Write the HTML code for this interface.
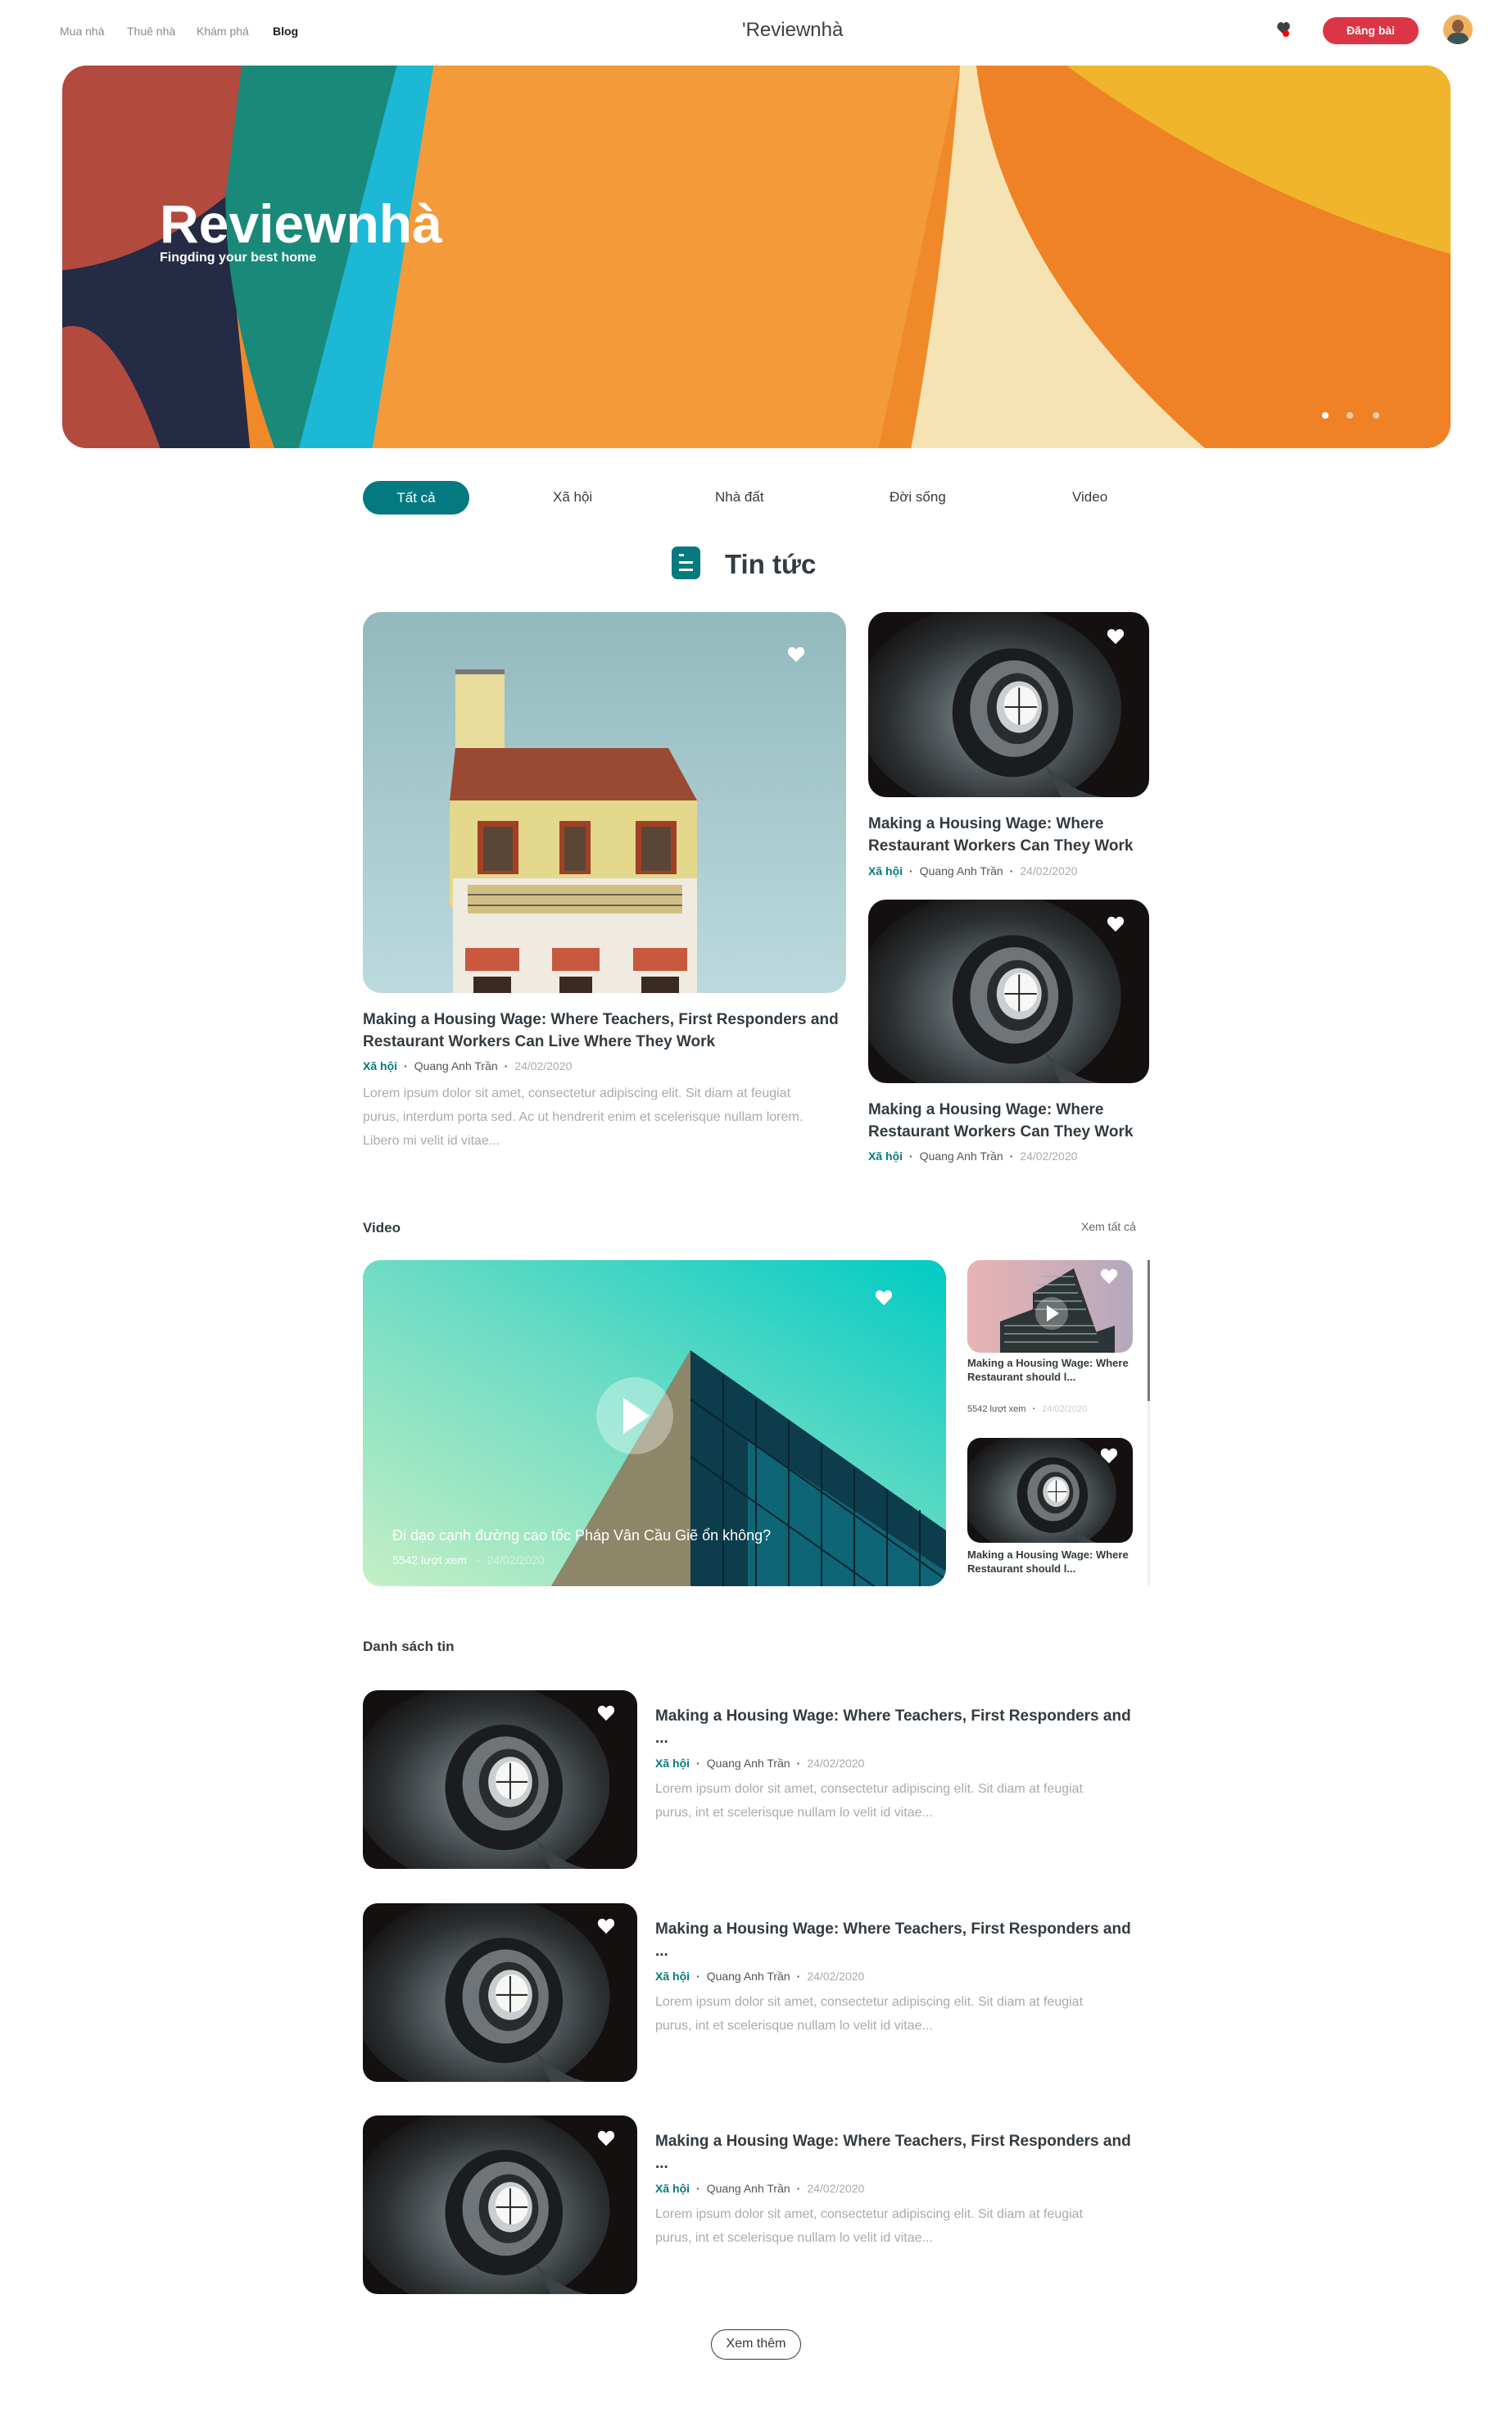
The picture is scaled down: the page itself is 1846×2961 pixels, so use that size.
<!DOCTYPE html>
<html><head><meta charset="utf-8">
<style>
*{margin:0;padding:0;box-sizing:border-box}
body{width:1846px;height:2961px;background:#fff;font-family:"Liberation Sans",sans-serif;color:#333b40;position:relative;overflow:hidden}
.a{position:absolute}
.nav{font-size:14px;color:#8a8a8a;top:30px}
.t{color:#333b40;font-weight:600;font-size:19px;line-height:27px}
.meta{font-size:14px;color:#555;white-space:nowrap}
.meta .c{color:#047a80;font-weight:600}
.meta .d{color:#aaa}
.meta .dot{margin:0 8px;font-weight:bold}
.desc{font-size:16px;color:#aaa;line-height:29px}
.img{position:absolute;overflow:hidden;border-radius:22px}
.heart{position:absolute;width:22px;height:20px}
</style></head><body>
<svg width="0" height="0" style="position:absolute">
<defs>
<radialGradient id="sg" cx="0.55" cy="0.55" r="0.6"><stop offset="0" stop-color="#9aa2a4"/><stop offset="0.35" stop-color="#5c6468"/><stop offset="0.7" stop-color="#2c3032"/><stop offset="1" stop-color="#141212"/></radialGradient>
<symbol id="spiral" viewBox="0 0 350 230" preserveAspectRatio="xMidYMid slice">
<rect width="350" height="230" fill="#141010"/>
<ellipse cx="150" cy="120" rx="165" ry="130" fill="url(#sg)"/>
<ellipse cx="180" cy="125" rx="75" ry="80" fill="#1b1c1d"/>
<ellipse cx="182" cy="120" rx="55" ry="60" fill="#6e7477"/>
<ellipse cx="186" cy="120" rx="38" ry="44" fill="#2a2b2c"/>
<ellipse cx="188" cy="118" rx="28" ry="32" fill="#c9cfd1"/>
<ellipse cx="190" cy="116" rx="21" ry="24" fill="#f7f7f5"/>
<line x1="170" y1="118" x2="210" y2="118" stroke="#222" stroke-width="2"/>
<line x1="188" y1="94" x2="188" y2="140" stroke="#222" stroke-width="2"/>
<path d="M220 190 Q260 230 300 230 L240 230 Z" fill="#3c4245"/>
</symbol>
<symbol id="hrt" viewBox="0 0 24 22"><path d="M12 21 L3 12 C-1 8 1 1 6.5 1 C9 1 11 2.5 12 4.5 C13 2.5 15 1 17.5 1 C23 1 25 8 21 12 Z" fill="#fff"/></symbol>
<linearGradient id="sky" x1="0" y1="0" x2="0" y2="1"><stop offset="0" stop-color="#93b9bd"/><stop offset="1" stop-color="#bcdadd"/></linearGradient>
</defs></svg>

<!-- NAV -->
<div class="a nav" style="left:73px">Mua nhà</div>
<div class="a nav" style="left:155px">Thuê nhà</div>
<div class="a nav" style="left:240px">Khám phá</div>
<div class="a nav" style="left:333px;color:#222;font-weight:bold">Blog</div>
<div class="a" style="left:906px;top:23px;font-size:24px;color:#3a4146">'Reviewnhà</div>
<svg class="a" style="left:1559px;top:26px" width="18" height="20" viewBox="0 0 18 20"><path d="M8 16 L1 9 C-1 5 2 1 5 1 C6.5 1 7.5 2 8 3 C8.5 2 9.5 1 11 1 C15 1 17 5 15 9 Z" fill="#3a4146"/><circle cx="11" cy="15" r="4" fill="#f00"/></svg>
<div class="a" style="left:1615px;top:21px;width:117px;height:33px;border-radius:17px;background:#dc3545;color:#fff;font-size:14px;font-weight:bold;text-align:center;line-height:33px">Đăng bài</div>
<div class="a" style="left:1762px;top:18px;width:36px;height:36px;border-radius:50%;background:#f2b160;overflow:hidden"><div style="position:absolute;left:11px;top:6px;width:14px;height:16px;border-radius:50%;background:#8a5a3c"></div><div style="position:absolute;left:5px;top:22px;width:26px;height:20px;border-radius:10px 10px 0 0;background:#3b5656"></div></div>

<!-- HERO -->
<div class="img" style="left:76px;top:80px;width:1695px;height:467px;border-radius:30px">
<svg width="1695" height="467" viewBox="0 0 1701 467" preserveAspectRatio="none">
<rect width="1701" height="467" fill="#f0892a"/>
<path d="M0 0 H220 L200 467 H0Z" fill="#b24a3d"/>
<path d="M0 250 Q100 240 200 160 L230 467 H120 Q60 300 0 320Z" fill="#252a45"/>
<path d="M220 0 H420 L350 467 H260 Q200 300 200 160Z" fill="#19897a"/>
<path d="M410 0 H460 L380 467 H290Z" fill="#1cb8d5"/>
<path d="M455 0 H1100 L1000 467 H380Z" fill="#f39a3a"/>
<path d="M1100 0 H1120 Q1150 250 1400 467 H1040 Q1080 250 1100 0Z" fill="#f5e3b4"/>
<path d="M1230 0 H1701 V230 Q1450 160 1230 0Z" fill="#f0b52c"/>
<path d="M1120 0 H1230 Q1450 160 1701 230 V467 H1400 Q1150 250 1120 0Z" fill="#ef8226"/>
</svg>
<div class="a" style="left:119px;top:155px;font-size:66px;font-weight:bold;color:#fff">Reviewnhà</div>
<div class="a" style="left:119px;top:226px;font-size:16px;font-weight:bold;color:#fff">Fingding your best home</div>
<div class="a" style="left:1538px;top:423px;width:8px;height:8px;border-radius:50%;background:#fff"></div>
<div class="a" style="left:1568px;top:423px;width:8px;height:8px;border-radius:50%;background:rgba(255,255,255,.6)"></div>
<div class="a" style="left:1600px;top:423px;width:8px;height:8px;border-radius:50%;background:rgba(255,255,255,.6)"></div>
</div>

<!-- TABS -->
<div class="a" style="left:443px;top:587px;width:130px;height:41px;border-radius:21px;background:#047a80;color:#fff;font-size:17px;text-align:center;line-height:41px">Tất cả</div>
<div class="a" style="left:675px;top:597px;font-size:17px">Xã hội</div>
<div class="a" style="left:873px;top:597px;font-size:17px">Nhà đất</div>
<div class="a" style="left:1086px;top:597px;font-size:17px">Đời sống</div>
<div class="a" style="left:1309px;top:597px;font-size:17px">Video</div>

<!-- TIN TUC -->
<div class="a" style="left:820px;top:667px;width:35px;height:40px;border-radius:7px;background:#047a80"><div style="position:absolute;left:9px;top:9px;width:6px;height:3px;background:#fff"></div><div style="position:absolute;left:9px;top:18px;width:17px;height:3px;background:#fff"></div><div style="position:absolute;left:9px;top:27px;width:17px;height:3px;background:#fff"></div></div>
<div class="a" style="left:885px;top:670px;font-size:33px;font-weight:bold;color:#333b40">Tin tức</div>

<!-- BIG CARD -->
<div class="img" style="left:443px;top:747px;width:590px;height:465px">
<svg width="590" height="465" viewBox="0 0 590 465">
<rect width="590" height="465" fill="url(#sky)"/>
<rect x="113" y="74" width="60" height="92" fill="#e9dc9c"/>
<rect x="113" y="70" width="60" height="6" fill="#777"/>
<path d="M113 166 H373 L408 230 H106Z" fill="#9a4a32"/>
<rect x="106" y="230" width="302" height="130" fill="#e3d88c"/>
<rect x="140" y="255" width="50" height="65" fill="#a33f24"/><rect x="147" y="262" width="36" height="54" fill="#5a4636"/>
<rect x="240" y="255" width="38" height="65" fill="#a33f24"/><rect x="246" y="262" width="26" height="54" fill="#5a4636"/>
<rect x="333" y="255" width="50" height="65" fill="#a33f24"/><rect x="340" y="262" width="36" height="54" fill="#5a4636"/>
<rect x="110" y="325" width="298" height="140" fill="#f0ebe0"/>
<rect x="128" y="333" width="262" height="35" fill="#c9b56a" opacity=".8"/>
<path d="M128 345 H390 M128 358 H390" stroke="#444" stroke-width="1.5"/>
<rect x="125" y="410" width="66" height="28" fill="#c8583e"/>
<rect x="231" y="410" width="58" height="28" fill="#c8583e"/>
<rect x="330" y="410" width="66" height="28" fill="#c8583e"/>
<rect x="135" y="445" width="46" height="20" fill="#3a2a22"/><rect x="240" y="445" width="40" height="20" fill="#3a2a22"/><rect x="340" y="445" width="46" height="20" fill="#3a2a22"/>
</svg>
<svg class="heart" style="left:518px;top:42px"><use href="#hrt"/></svg>
</div>
<div class="a t" style="left:443px;top:1231px;width:590px">Making a Housing Wage: Where Teachers, First Responders and Restaurant Workers Can Live Where They Work</div>
<div class="a meta" style="left:443px;top:1293px"><span class="c">Xã hội</span><span class="dot">·</span>Quang Anh Trần<span class="dot">·</span><span class="d">24/02/2020</span></div>
<div class="a desc" style="left:443px;top:1320px;width:560px">Lorem ipsum dolor sit amet, consectetur adipiscing elit. Sit diam at feugiat purus, interdum porta sed. Ac ut hendrerit enim et scelerisque nullam lorem. Libero mi velit id vitae...</div>

<!-- RIGHT CARDS -->
<div class="img" style="left:1060px;top:747px;width:343px;height:226px"><svg width="343" height="226"><use href="#spiral" width="343" height="226"/></svg><svg class="heart" style="left:291px;top:20px"><use href="#hrt"/></svg></div>
<div class="a t" style="left:1060px;top:992px;width:350px">Making a Housing Wage: Where Restaurant Workers Can They Work</div>
<div class="a meta" style="left:1060px;top:1055px"><span class="c">Xã hội</span><span class="dot">·</span>Quang Anh Trần<span class="dot">·</span><span class="d">24/02/2020</span></div>
<div class="img" style="left:1060px;top:1098px;width:343px;height:224px"><svg width="343" height="224"><use href="#spiral" width="343" height="224"/></svg><svg class="heart" style="left:291px;top:20px"><use href="#hrt"/></svg></div>
<div class="a t" style="left:1060px;top:1341px;width:350px">Making a Housing Wage: Where Restaurant Workers Can They Work</div>
<div class="a meta" style="left:1060px;top:1403px"><span class="c">Xã hội</span><span class="dot">·</span>Quang Anh Trần<span class="dot">·</span><span class="d">24/02/2020</span></div>

<!-- VIDEO -->
<div class="a" style="left:443px;top:1489px;font-size:17px;font-weight:600">Video</div>
<div class="a" style="left:1320px;top:1489px;font-size:14px;color:#666">Xem tất cả</div>
<div class="img" style="left:443px;top:1538px;width:712px;height:398px">
<svg width="712" height="398" viewBox="0 0 712 398">
<defs><linearGradient id="vg" x1="0" y1="1" x2="1" y2="0"><stop offset="0" stop-color="#c4efc4"/><stop offset="0.5" stop-color="#6fdcc4"/><stop offset="1" stop-color="#00cbc4"/></linearGradient></defs>
<rect width="712" height="398" fill="url(#vg)"/>
<path d="M400 110 L712 330 V398 H230Z" fill="#0d3c4c"/>
<path d="M400 110 L230 398 H400Z" fill="#8e8668"/>
<path d="M470 220 L712 380 V398 H470Z" fill="#0f6f80" opacity=".8"/>
<g stroke="#0a2530" stroke-width="2"><path d="M440 140 V398 M480 170 V398 M520 195 V398 M560 225 V398 M600 255 V398 M640 280 V398 M680 305 V398"/><path d="M400 170 L712 390 M400 240 L712 460"/></g>
<circle cx="332" cy="190" r="47" fill="rgba(255,255,255,.35)"/>
<path d="M318 168 L350 190 L318 212Z" fill="#fff"/>
</svg>
<svg class="heart" style="left:625px;top:36px"><use href="#hrt"/></svg>
<div class="a" style="left:36px;top:326px;font-size:18px;color:#fff;white-space:nowrap">Đi dạo cạnh đường cao tốc Pháp Vân Cầu Giẽ ổn không?</div>
<div class="a" style="left:36px;top:358px;font-size:14px;color:#fff;white-space:nowrap">5542 lượt xem <span style="margin:0 8px">·</span><span style="opacity:.5">24/02/2020</span></div>
</div>

<div class="a" style="left:1181px;top:1538px;width:225px;height:398px;overflow:hidden">
<div class="img" style="left:0;top:0;width:202px;height:113px;border-radius:16px">
<svg width="202" height="113" viewBox="0 0 202 113"><defs><linearGradient id="pg" x1="0" x2="1"><stop offset="0" stop-color="#e8b3b4"/><stop offset="1" stop-color="#b5a9bd"/></linearGradient></defs>
<rect width="202" height="113" fill="url(#pg)"/>
<path d="M80 40 L130 10 L160 95 V113 H40 V75 L80 60Z" fill="#2d3434"/>
<path d="M150 90 L180 80 V113 H150Z" fill="#2b3436"/>
<g stroke="#9bb0b0" stroke-width="1.5" opacity=".8"><path d="M82 50 H140 M82 60 H145 M45 80 H155 M45 90 H158 M45 100 H160 M82 40 H135 M84 30 H132 M90 20 H130"/></g>
<circle cx="103" cy="65" r="20" fill="rgba(255,255,255,.3)"/><path d="M97 55 L112 65 L97 75Z" fill="#fff"/></svg>
<svg class="heart" style="left:162px;top:10px"><use href="#hrt"/></svg></div>
<div class="a" style="left:0;top:117px;width:205px;font-size:13px;font-weight:600;line-height:17px">Making a Housing Wage: Where Restaurant should l...</div>
<div class="a meta" style="left:0;top:176px;font-size:11px">5542 lượt xem<span class="dot">·</span><span class="d" style="color:#ccc">24/02/2020</span></div>
<div class="img" style="left:0;top:217px;width:202px;height:128px;border-radius:16px"><svg width="202" height="128"><use href="#spiral" width="202" height="128"/></svg><svg class="heart" style="left:162px;top:12px"><use href="#hrt"/></svg></div>
<div class="a" style="left:0;top:351px;width:205px;font-size:13px;font-weight:600;line-height:17px">Making a Housing Wage: Where Restaurant should l...</div>
<div class="a" style="left:220px;top:0;width:3px;height:398px;background:#eee"></div>
<div class="a" style="left:220px;top:0;width:3px;height:172px;background:#777"></div>
</div>

<!-- DANH SACH TIN -->
<div class="a" style="left:443px;top:2000px;font-size:17px;font-weight:600">Danh sách tin</div>

<div class="img" style="left:443px;top:2063px;width:335px;height:218px;border-radius:18px"><svg width="335" height="218"><use href="#spiral" width="335" height="218"/></svg><svg class="heart" style="left:286px;top:18px"><use href="#hrt"/></svg></div>
<div class="a t" style="left:800px;top:2081px;width:610px">Making a Housing Wage: Where Teachers, First Responders and<br>...</div>
<div class="a meta" style="left:800px;top:2144px"><span class="c">Xã hội</span><span class="dot">·</span>Quang Anh Trần<span class="dot">·</span><span class="d">24/02/2020</span></div>
<div class="a desc" style="left:800px;top:2169px;width:540px">Lorem ipsum dolor sit amet, consectetur adipiscing elit. Sit diam at feugiat purus, int et scelerisque nullam lo velit id vitae...</div>

<div class="img" style="left:443px;top:2323px;width:335px;height:218px;border-radius:18px"><svg width="335" height="218"><use href="#spiral" width="335" height="218"/></svg><svg class="heart" style="left:286px;top:18px"><use href="#hrt"/></svg></div>
<div class="a t" style="left:800px;top:2341px;width:610px">Making a Housing Wage: Where Teachers, First Responders and<br>...</div>
<div class="a meta" style="left:800px;top:2404px"><span class="c">Xã hội</span><span class="dot">·</span>Quang Anh Trần<span class="dot">·</span><span class="d">24/02/2020</span></div>
<div class="a desc" style="left:800px;top:2429px;width:540px">Lorem ipsum dolor sit amet, consectetur adipiscing elit. Sit diam at feugiat purus, int et scelerisque nullam lo velit id vitae...</div>

<div class="img" style="left:443px;top:2582px;width:335px;height:218px;border-radius:18px"><svg width="335" height="218"><use href="#spiral" width="335" height="218"/></svg><svg class="heart" style="left:286px;top:18px"><use href="#hrt"/></svg></div>
<div class="a t" style="left:800px;top:2600px;width:610px">Making a Housing Wage: Where Teachers, First Responders and<br>...</div>
<div class="a meta" style="left:800px;top:2663px"><span class="c">Xã hội</span><span class="dot">·</span>Quang Anh Trần<span class="dot">·</span><span class="d">24/02/2020</span></div>
<div class="a desc" style="left:800px;top:2688px;width:540px">Lorem ipsum dolor sit amet, consectetur adipiscing elit. Sit diam at feugiat purus, int et scelerisque nullam lo velit id vitae...</div>

<div class="a" style="left:868px;top:2843px;width:110px;height:37px;border:1.5px solid #333b40;border-radius:19px;font-size:16px;text-align:center;line-height:34px">Xem thêm</div>
</body></html>
